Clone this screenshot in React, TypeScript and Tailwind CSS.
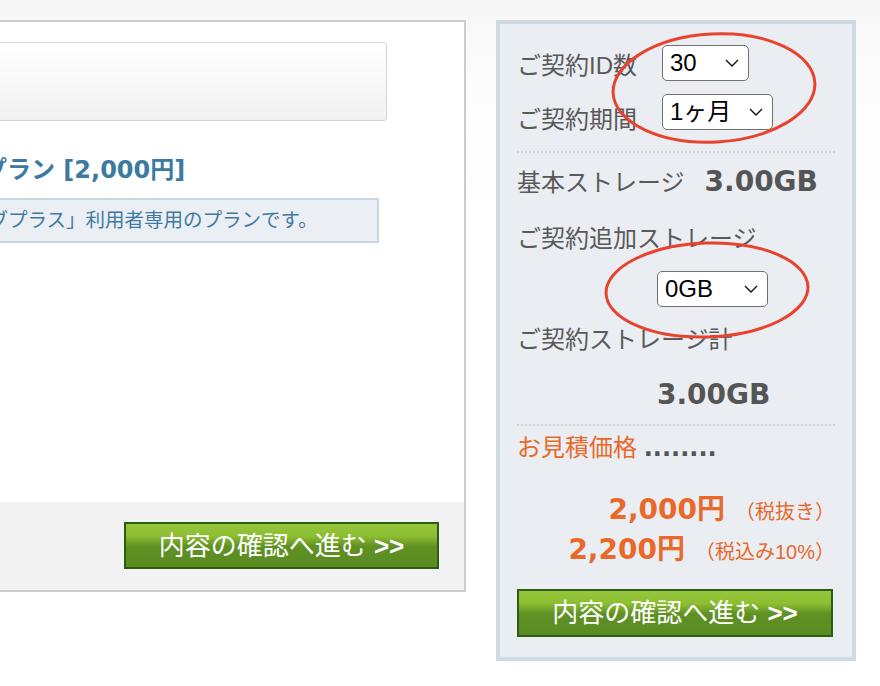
import React from 'react';

const jp = "font-['Liberation_Sans','Noto_Sans_CJK_JP',sans-serif]";
const num = "font-['DejaVu_Sans','Noto_Sans_CJK_JP',sans-serif]";

const Chevron = () => (
  <svg width="14" height="8" viewBox="0 0 14 8" className="shrink-0">
    <path d="M1 1l6 6 6-6" fill="none" stroke="#111" strokeWidth="1.4" />
  </svg>
);

const FakeSelect = ({ value, width }: { value: string; width: string }) => (
  <div
    className={`inline-flex h-[36px] shrink-0 items-center justify-between rounded-[5px] border-[1.5px] border-[#707070] bg-white pl-[7px] pr-[9px] text-[24px] leading-none text-black ${jp} ${width}`}
  >
    <span>{value}</span>
    <Chevron />
  </div>
);

const GreenButton = ({ width, height }: { width: string; height: string }) => (
  <button
    className={`flex items-center justify-center border-2 border-[#2d5c14] bg-[linear-gradient(#95c53b_0%,#8dbf32_28%,#5f9024_52%,#5b8c21_100%)] text-[26px] leading-none text-white ${jp} ${width} ${height}`}
  >
    内容の確認へ進む&nbsp;<span className="font-bold">&gt;&gt;</span>
  </button>
);

const Dotted = () => <div className="h-0 border-t-2 border-dotted border-[#d0d5da]" />;

const LeftPanel = () => (
  <div className="flex h-[572px] w-[576px] shrink-0 flex-col border-2 border-[#cccccc] bg-white">
    <div className="pl-[19px] pt-[20px]">
      <div className="h-[79px] w-[476px] rounded-[3px] border border-[#d6d6d6] bg-[linear-gradient(#ffffff,#f1f1f1)]" />
      <h3 className={`mt-[33px] whitespace-nowrap text-[24px] font-bold leading-8 text-[#3c7aa2] ${num}`}>
        ウェブプラン [2,000円]
      </h3>
      <div className={`mt-[12px] flex h-[45px] w-[468px] items-center whitespace-nowrap border-2 border-[#cad6e0] bg-[#ebeff3] pl-[17px] text-[19.5px] text-[#3f7aa3] ${jp}`}>
        「ウェブプラス」利用者専用のプランです。
      </div>
    </div>
    <div className="mt-auto flex h-[88px] justify-end bg-[#f2f2f2] pr-[25px] pt-[20px]">
      <GreenButton width="w-[315px]" height="h-[47px]" />
    </div>
  </div>
);

const RightPanel = () => (
  <div className={`w-[360px] shrink-0 border-4 border-[#cfdae3] bg-[#eaeef2] px-[17px] pb-[20px] pt-[21px] text-[24px] leading-8 text-[#595959] ${jp}`}>
    <div className="flex items-start">
      <span className="w-[145px] shrink-0 pt-[5px]">ご契約ID数</span>
      <FakeSelect value="30" width="w-[87px]" />
    </div>
    <div className="mt-[12px] flex items-start">
      <span className="w-[145px] shrink-0 pt-[10px]">ご契約期間</span>
      <FakeSelect value="1ヶ月" width="w-[111px]" />
    </div>

    <div className="mt-[15px]">
      <Dotted />
    </div>

    <div className="mt-[13px] flex items-baseline">
      <span>基本ストレージ</span>
      <span className={`ml-5 text-[28px] font-bold text-[#555555] ${num}`}>3.00GB</span>
    </div>

    <div className="mt-[24px]">ご契約追加ストレージ</div>
    <div className="mt-[16px] pl-[140px]">
      <FakeSelect value="0GB" width="w-[111px]" />
    </div>

    <div className="mt-[17px]">ご契約ストレージ計</div>
    <div className={`mt-[23px] pl-[140px] text-[28px] font-bold text-[#555555] ${num}`}>3.00GB</div>

    <div className="mt-[13px]">
      <Dotted />
    </div>

    <div className="mt-[6px] whitespace-nowrap">
      <span className="text-[#e8692a]">お見積価格</span>{' '}
      <span className={`font-bold text-[#555555] ${num}`}>........</span>
    </div>

    <div className={`mt-[26px] h-[40px] text-right text-[28px] font-bold leading-[40px] text-[#e8692a] ${num}`}>
      2,000円
      <span className={`ml-[10px] text-[20px] font-normal leading-none ${jp}`}>（税抜き）</span>
    </div>
    <div className={`h-[40px] text-right text-[28px] font-bold leading-[40px] text-[#e8692a] ${num}`}>
      2,200円
      <span className={`ml-[10px] text-[20px] font-normal leading-none ${jp}`}>（税込み10%）</span>
    </div>

    <div className="mt-[19px]">
      <GreenButton width="w-[316px]" height="h-[48px]" />
    </div>
  </div>
);

export default function App() {
  return (
    <div className="relative h-[686px] w-full overflow-hidden bg-[linear-gradient(to_bottom,#f6f6f6_0px,#f8f8f8_20px,#fcfcfc_80px,#ffffff_220px)]">
      <div className="-ml-[110px] flex items-start gap-[30px] pt-[20px]">
        <LeftPanel />
        <RightPanel />
      </div>

      {/* hand-drawn annotation circles */}
      <svg className="pointer-events-none absolute left-0 top-0" width="880" height="686" viewBox="0 0 880 686">
        <ellipse cx="714" cy="88" rx="101" ry="54" transform="rotate(-3 714 88)" fill="none" stroke="#e8432f" strokeWidth="3" />
        <ellipse cx="707" cy="290" rx="101" ry="47" transform="rotate(-2 707 290)" fill="none" stroke="#e8432f" strokeWidth="3" />
      </svg>
    </div>
  );
}
